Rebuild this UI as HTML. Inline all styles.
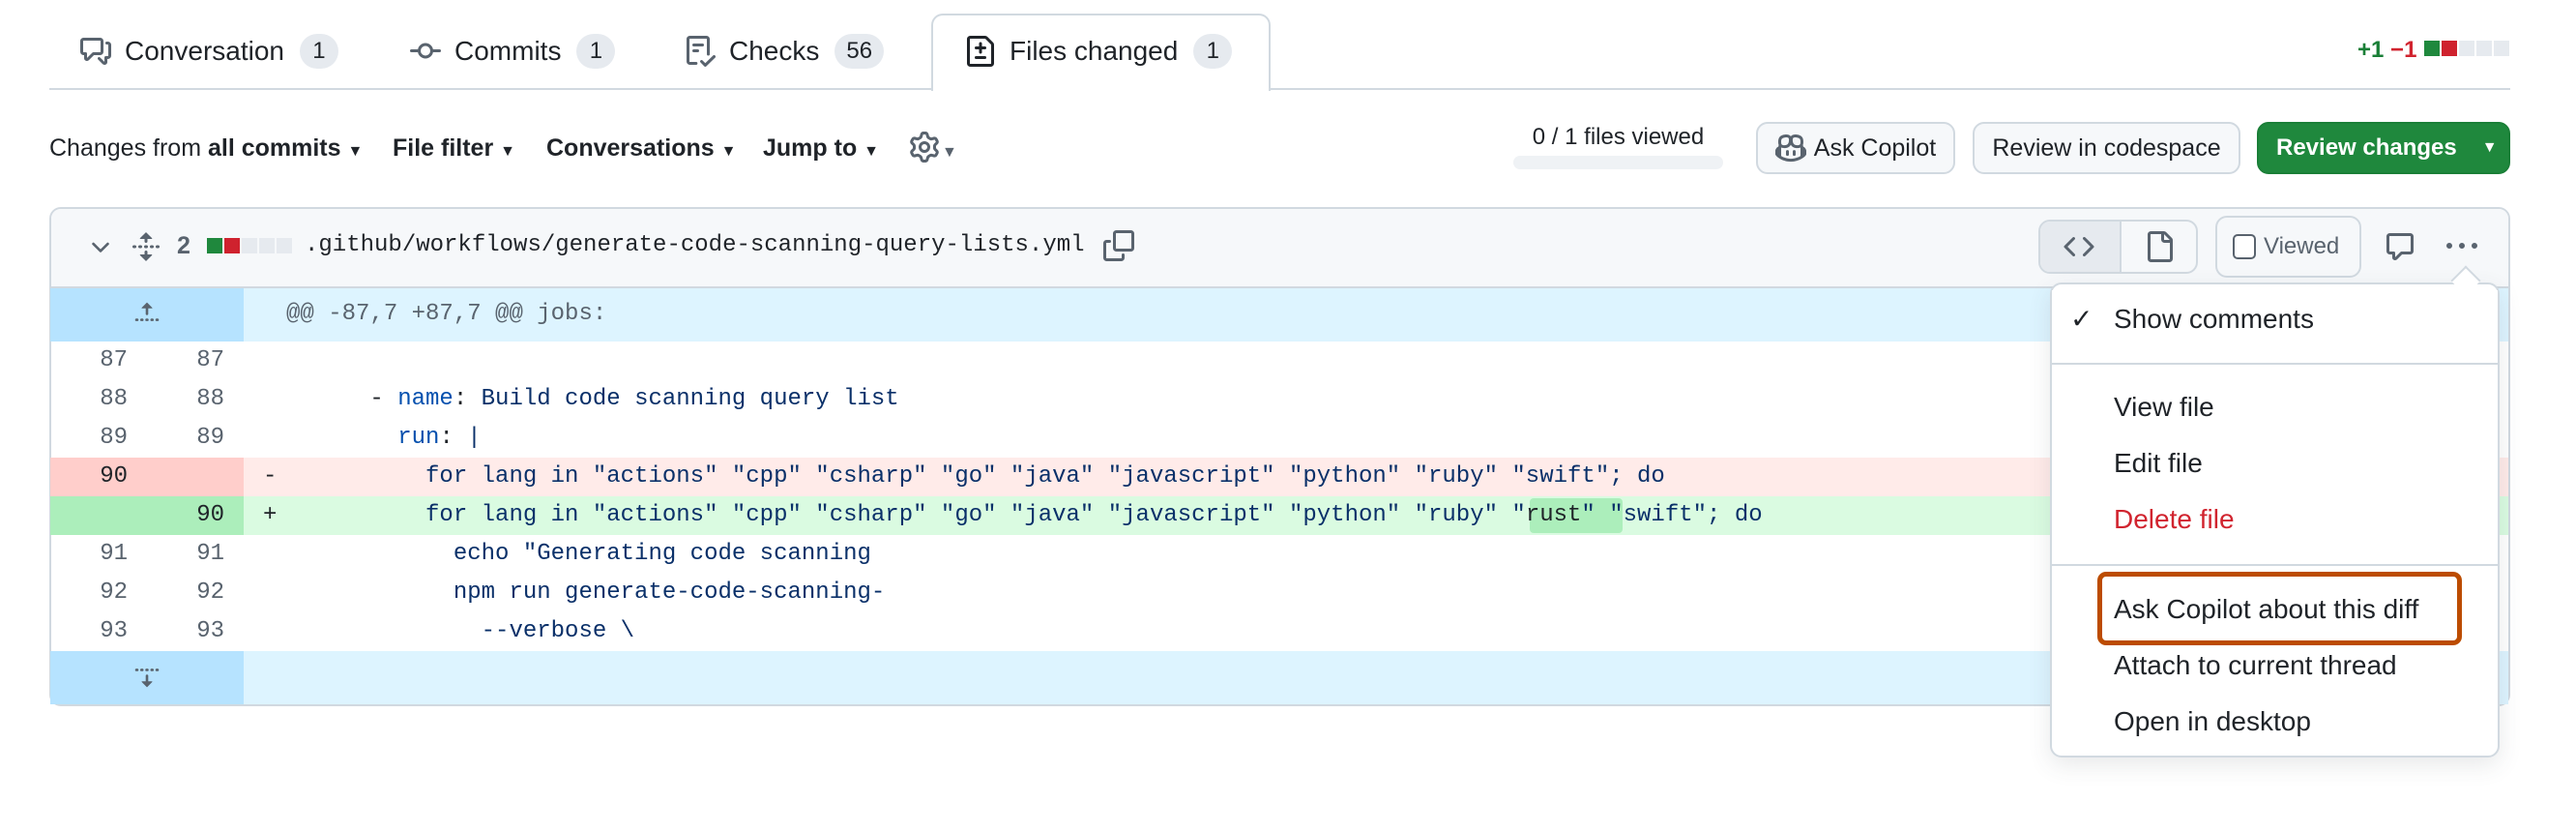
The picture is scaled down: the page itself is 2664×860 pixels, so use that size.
<!DOCTYPE html>
<html><head><meta charset="utf-8"><style>
*{box-sizing:border-box;margin:0;padding:0}
body{width:2664px;height:860px;background:#fff;position:relative;overflow:hidden;font-family:"Liberation Sans",sans-serif;color:#1f2328}
.a{position:absolute}
.tab{position:absolute;top:14px;height:78px;display:flex;align-items:center;font-size:28px;color:#1f2328;white-space:nowrap}
.cnt{display:inline-block;background:#e6eaef;border-radius:20px;min-width:40px;height:36px;line-height:36px;text-align:center;font-size:24px;margin-left:16px;padding:0 12px;color:#1f2328}
.tb{position:absolute;top:139px;font-size:25px;color:#1f2328;white-space:nowrap}
.btn{position:absolute;top:126px;height:54px;border:2px solid #d1d9e0;border-radius:12px;background:#f6f8fa;font-size:25px;display:flex;align-items:center;justify-content:center;color:#1f2328;white-space:nowrap}
.mono{font-family:"Liberation Mono",monospace;font-size:24px}
.row{position:absolute;left:52px;width:2542px;height:40px}
.ln{position:absolute;top:0;height:40px;line-height:40px;width:100px;text-align:right;padding-right:20px;color:#59636e;font-family:"Liberation Mono",monospace;font-size:24px}
.code{position:absolute;left:200px;top:0;height:40px;line-height:40px;white-space:pre;color:#0a3069;font-family:"Liberation Mono",monospace;font-size:24px}
.mk{position:absolute;left:220px;top:0;line-height:40px;font-family:"Liberation Mono",monospace;font-size:24px;color:#1f2328}
.mi{position:absolute;left:2186px;font-size:28px;color:#1f2328;white-space:nowrap;line-height:40px}
</style></head><body>

<!-- tabs -->
<div class="a" style="left:51px;top:91px;width:2545px;height:2px;background:#d1d9e0"></div>
<div class="a" style="left:963px;top:14px;width:351px;height:80px;border:2px solid #d1d9e0;border-bottom:none;border-radius:12px 12px 0 0;background:#fff"></div>

<div class="tab" style="left:83px">
<svg width="32" height="32" viewBox="0 0 16 16" style="margin-right:14px"><path fill="#59636e" d="M1.75 1h8.5c.966 0 1.750.784 1.75 1.75v5.5A1.75 1.75 0 0 1 10.25 10H7.061l-2.574 2.573A1.458 1.458 0 0 1 2 11.543V10h-.25A1.75 1.75 0 0 1 0 8.25v-5.5C0 1.784.784 1 1.750 1ZM1.5 2.75v5.5c0 .138.112.25.25.25h1a.75.75 0 0 1 .75.75v2.19l2.72-2.72a.749.749 0 0 1 .53-.22h3.5a.25.25 0 0 0 .25-.25v-5.5a.25.25 0 0 0-.25-.25h-8.5a.25.25 0 0 0-.25.25Zm13 2a.25.25 0 0 0-.25-.25h-.5a.75.75 0 0 1 0-1.5h.5c.966 0 1.75.784 1.75 1.75v5.5A1.75 1.75 0 0 1 14.25 12H14v1.543a1.458 1.458 0 0 1-2.487 1.03L9.22 12.28a.749.749 0 0 1 .326-1.275.749.749 0 0 1 .734.215l2.22 2.22v-2.19a.75.75 0 0 1 .75-.75h1a.25.25 0 0 0 .25-.25Z"/></svg>Conversation<span class="cnt">1</span></div>

<div class="tab" style="left:424px">
<svg width="32" height="32" viewBox="0 0 16 16" style="margin-right:14px"><path fill="#59636e" d="M11.93 8.5a4.002 4.002 0 0 1-7.860 0H.75a.75.75 0 0 1 0-1.5h3.32a4.002 4.002 0 0 1 7.86 0h3.32a.75.75 0 0 1 0 1.5Zm-1.43-.75a2.5 2.5 0 1 0-5 0 2.5 2.5 0 0 0 5 0Z"/></svg>Commits<span class="cnt">1</span></div>

<div class="tab" style="left:708px">
<svg width="32" height="32" viewBox="0 0 16 16" style="margin-right:14px"><path fill="#59636e" d="M2.5 1.75v11.5c0 .138.112.25.25.25h3.17a.75.75 0 0 1 0 1.5H2.75A1.75 1.75 0 0 1 1 13.25V1.75C1 .784 1.784 0 2.75 0h8.5C12.216 0 13 .784 13 1.75v7.736a.75.75 0 0 1-1.5 0V1.75a.25.25 0 0 0-.25-.25h-8.5a.25.25 0 0 0-.25.25Zm13.274 9.537v-.001l-4.557 4.45a.75.75 0 0 1-1.055-.008l-1.943-1.95a.75.75 0 0 1 1.062-1.058l1.419 1.425 4.026-3.932a.75.75 0 1 1 1.048 1.074ZM4.75 4h4.5a.75.75 0 0 1 0 1.5h-4.5a.75.75 0 0 1 0-1.5ZM4 7.75A.75.75 0 0 1 4.75 7h2a.75.75 0 0 1 0 1.5h-2A.75.75 0 0 1 4 7.750Z"/></svg>Checks<span class="cnt">56</span></div>

<div class="tab" style="left:998px">
<svg width="32" height="32" viewBox="0 0 16 16" style="margin-right:14px"><path fill="#1f2328" d="M1 1.75C1 .784 1.784 0 2.75 0h7.586c.464 0 .909.184 1.237.513l2.914 2.914c.329.328.513.773.513 1.237v9.586A1.75 1.75 0 0 1 13.25 16H2.75A1.75 1.75 0 0 1 1 14.25Zm1.75-.25a.25.25 0 0 0-.25.25v12.5c0 .138.112.25.25.25h10.5a.25.25 0 0 0 .25-.25V4.664a.25.25 0 0 0-.073-.177l-2.914-2.914a.25.25 0 0 0-.177-.073ZM8 3.25a.75.75 0 0 1 .75.75v1.5h1.5a.75.75 0 0 1 0 1.5h-1.5v1.5a.75.75 0 0 1-1.5 0V7h-1.5a.75.75 0 0 1 0-1.5h1.5V4A.75.75 0 0 1 8 3.25Zm-3 8a.75.75 0 0 1 .75-.75h4.5a.75.75 0 0 1 0 1.5h-4.5a.75.75 0 0 1-.75-.75Z"/></svg>Files changed<span class="cnt">1</span></div>

<div class="a" style="left:2438px;top:38px;font-size:24px;font-weight:bold;white-space:nowrap"><span style="color:#1a7f37">+1</span> <span style="color:#d1242f">−1</span></div>
<div class="a" style="left:2507px;top:42px;display:flex;gap:2px">
<i style="width:16px;height:16px;background:#1f883d"></i><i style="width:16px;height:16px;background:#cf222e"></i><i style="width:16px;height:16px;background:#e6eaef"></i><i style="width:16px;height:16px;background:#e6eaef"></i><i style="width:16px;height:16px;background:#e6eaef"></i></div>

<!-- toolbar -->
<div class="tb" style="left:51px">Changes from <b>all commits</b> <span style="font-size:16px">▼</span></div>
<div class="tb" style="left:406px;font-weight:bold">File filter <span style="font-size:16px">▼</span></div>
<div class="tb" style="left:565px;font-weight:bold">Conversations <span style="font-size:16px">▼</span></div>
<div class="tb" style="left:789px;font-weight:bold">Jump to <span style="font-size:16px">▼</span></div>
<div class="a" style="left:940px;top:136px"><svg width="32" height="32" viewBox="0 0 16 16"><path fill="#59636e" d="M8 0a8.2 8.2 0 0 1 .701.031C9.444.095 9.99.645 10.16 1.29l.288 1.107c.018.066.079.158.212.224.231.114.454.243.668.386.123.082.233.09.299.071l1.103-.303c.644-.176 1.392.021 1.82.63.27.385.506.792.704 1.218.315.675.111 1.422-.364 1.891l-.814.806c-.049.048-.098.147-.088.294.016.257.016.515 0 .772-.01.147.038.246.088.294l.814.806c.475.469.679 1.216.364 1.891a7.977 7.977 0 0 1-.704 1.217c-.428.61-1.176.807-1.820.63l-1.102-.302c-.067-.019-.177-.011-.3.071a5.909 5.909 0 0 1-.668.386c-.133.066-.194.158-.211.224l-.29 1.106c-.168.646-.715 1.196-1.458 1.26a8.006 8.006 0 0 1-1.402 0c-.743-.064-1.289-.614-1.458-1.26l-.289-1.106c-.018-.066-.079-.158-.212-.224a5.738 5.738 0 0 1-.668-.386c-.123-.082-.233-.09-.299-.071l-1.103.303c-.644.176-1.392-.021-1.82-.63a8.12 8.12 0 0 1-.704-1.218c-.315-.675-.111-1.422.363-1.891l.815-.806c.05-.048.098-.147.088-.294a6.214 6.214 0 0 1 0-.772c.01-.147-.038-.246-.088-.294l-.815-.806C.635 6.045.431 5.298.746 4.623a7.92 7.92 0 0 1 .704-1.217c.428-.61 1.176-.807 1.82-.63l1.102.302c.067.019.177.011.3-.071.214-.143.437-.272.668-.386.133-.066.194-.158.211-.224l.29-1.106C6.009.645 6.556.095 7.299.03 7.53.01 7.764 0 8 0Zm-.571 1.525c-.036.003-.108.036-.137.146l-.289 1.105c-.147.561-.549.967-.998 1.189-.173.086-.34.183-.5.29-.417.278-.97.423-1.529.27l-1.103-.303c-.109-.03-.175.016-.195.045-.22.312-.412.644-.573.99-.014.031-.021.11.059.19l.815.806c.411.406.562.957.53 1.456a4.709 4.709 0 0 0 0 .582c.032.499-.119 1.05-.53 1.456l-.815.806c-.081.08-.073.159-.059.19.162.346.353.677.573.989.02.03.085.076.195.046l1.102-.303c.56-.153 1.113-.008 1.53.27.161.107.328.204.501.29.447.222.85.629.997 1.189l.289 1.105c.029.109.101.143.137.146a6.6 6.6 0 0 0 1.142 0c.036-.003.108-.036.137-.146l.289-1.105c.147-.561.549-.967.998-1.189.173-.086.34-.183.5-.29.417-.278.97-.423 1.529-.27l1.103.303c.109.029.175-.016.195-.045.22-.313.411-.644.573-.99.014-.031.021-.11-.059-.19l-.815-.806c-.411-.406-.562-.957-.53-1.456a4.709 4.709 0 0 0 0-.582c-.032-.499.119-1.05.53-1.456l.815-.806c.081-.08.073-.159.059-.19a6.464 6.464 0 0 0-.573-.989c-.02-.03-.085-.076-.195-.046l-1.102.303c-.56.153-1.113.008-1.53-.27a4.44 4.44 0 0 0-.501-.29c-.447-.222-.85-.629-.997-1.189l-.289-1.105c-.029-.11-.101-.143-.137-.146a6.6 6.6 0 0 0-1.142 0ZM11 8a3 3 0 1 1-6 0 3 3 0 0 1 6 0ZM9.5 8a1.5 1.5 0 1 0-3.001.001A1.5 1.5 0 0 0 9.5 8Z"/></svg><span style="font-size:16px;color:#59636e;position:relative;top:-6px;margin-left:2px">▼</span></div>

<div class="a" style="left:1565px;top:128px;width:217px;text-align:center;font-size:24px;color:#1f2328">0 / 1 files viewed</div>
<div class="a" style="left:1565px;top:161px;width:217px;height:14px;background:#eff2f5;border-radius:7px"></div>

<div class="btn" style="left:1816px;width:206px"><svg width="32" height="32" viewBox="0 0 16 16" style="margin-right:8px"><path fill="#59636e" d="M7.998 15.035c-4.562 0-7.873-2.914-7.998-3.749V9.338c.085-.628.677-1.686 1.588-2.065.013-.07.024-.143.036-.218.029-.183.06-.384.126-.612-.201-.508-.254-1.084-.254-1.656 0-.87.128-1.769.693-2.484.579-.733 1.494-1.124 2.724-1.261 1.206-.134 2.262.034 2.944.765.05.053.096.108.139.165.044-.057.094-.112.143-.165.682-.731 1.738-.899 2.944-.765 1.23.137 2.145.528 2.724 1.261.566.715.693 1.614.693 2.484 0 .572-.053 1.148-.254 1.656.066.228.098.429.126.612.012.076.024.148.037.218.924.385 1.522 1.471 1.591 2.095v1.872c0 .766-3.351 3.795-8.002 3.795Zm0-1.485c2.28 0 4.584-1.11 5.002-1.433V7.862l-.023-.116c-.49.21-1.075.291-1.727.291-1.146 0-2.059-.327-2.71-.991A3.222 3.222 0 0 1 8 6.303a3.24 3.24 0 0 1-.544.743c-.65.664-1.563.991-2.71.991-.652 0-1.236-.081-1.727-.291l-.023.116v4.255c.419.323 2.722 1.433 5.002 1.433ZM6.762 2.83c-.193-.206-.637-.413-1.682-.297-1.019.113-1.479.404-1.713.7-.247.312-.369.789-.369 1.554 0 .793.129 1.171.308 1.371.162.181.519.379 1.442.379.853 0 1.339-.235 1.638-.54.315-.322.527-.827.617-1.553.117-.935-.037-1.395-.241-1.614Zm4.155-.297c-1.044-.116-1.488.091-1.681.297-.204.219-.359.679-.242 1.614.091.726.303 1.231.618 1.553.299.305.784.54 1.638.54.922 0 1.28-.198 1.442-.379.179-.2.308-.578.308-1.371 0-.765-.123-1.242-.37-1.554-.233-.296-.693-.587-1.713-.7Z"/><path fill="#59636e" d="M6.25 9.037a.75.75 0 0 1 .75.75v1.501a.75.75 0 0 1-1.5 0V9.787a.75.75 0 0 1 .75-.75Zm4.25.75v1.501a.75.75 0 0 1-1.5 0V9.787a.75.75 0 0 1 1.5 0Z"/></svg>Ask Copilot</div>
<div class="btn" style="left:2040px;width:277px">Review in codespace</div>
<div class="btn" style="left:2334px;width:262px;background:#1f883d;border-color:#1a7f37;color:#fff;justify-content:flex-start;padding-left:18px;font-weight:bold;font-size:24px">Review changes<span style="font-size:16px;margin-left:26px">▼</span></div>

<!-- file box -->
<div class="a" style="left:51px;top:214px;width:2545px;height:516px;border:2px solid #d1d9e0;border-radius:12px;overflow:hidden;background:#fff">
 <div class="a" style="left:0;top:0;width:100%;height:82px;background:#f6f8fa;border-bottom:2px solid #d1d9e0"></div>
</div>
<svg class="a" style="left:90px;top:242px" width="28" height="28" viewBox="0 0 16 16"><path fill="#59636e" d="M12.78 5.22a.749.749 0 0 1 0 1.06l-4.25 4.25a.749.749 0 0 1-1.06 0L3.22 6.28a.749.749 0 1 1 1.06-1.06L8 8.939l3.72-3.719a.749.749 0 0 1 1.06 0Z"/></svg>
<svg class="a" style="left:135px;top:239px" width="32" height="32" viewBox="0 0 16 16"><path fill="#59636e" d="m8.177.677 2.896 2.896a.25.25 0 0 1-.177.427H8.75v1.25a.75.75 0 0 1-1.5 0V4H5.104a.25.25 0 0 1-.177-.427L7.823.677a.25.25 0 0 1 .354 0ZM7.25 10.75a.75.75 0 0 1 1.5 0V12h2.146a.25.25 0 0 1 .177.427l-2.896 2.896a.25.25 0 0 1-.354 0l-2.896-2.896A.25.25 0 0 1 5.104 12H7.25v-1.25Zm-5-2a.75.75 0 0 0 0-1.5h-.5a.75.75 0 0 0 0 1.5h.5ZM6 8a.75.75 0 0 1-.75.75h-.5a.75.75 0 0 1 0-1.5h.5A.75.75 0 0 1 6 8Zm2.25.75a.75.75 0 0 0 0-1.5h-.5a.75.75 0 0 0 0 1.5h.5ZM12 8a.75.75 0 0 1-.75.75h-.5a.75.75 0 0 1 0-1.5h.5A.75.75 0 0 1 12 8Zm2.25.75a.75.75 0 0 0 0-1.5h-.5a.75.75 0 0 0 0 1.5h.5Z"/></svg>
<div class="a" style="left:183px;top:240px;font-size:25px;font-weight:bold;color:#59636e">2</div>
<div class="a" style="left:214px;top:246px;display:flex;gap:2px">
<i style="width:16px;height:16px;background:#1f883d"></i><i style="width:16px;height:16px;background:#cf222e"></i><i style="width:16px;height:16px;background:#e6eaef"></i><i style="width:16px;height:16px;background:#e6eaef"></i><i style="width:16px;height:16px;background:#e6eaef"></i></div>
<div class="a mono" style="left:315px;top:240px;color:#1f2328">.github/workflows/generate-code-scanning-query-lists.yml</div>
<svg class="a" style="left:1141px;top:238px" width="32" height="32" viewBox="0 0 16 16"><path fill="#59636e" d="M0 6.75C0 5.784.784 5 1.75 5h1.5a.75.75 0 0 1 0 1.5h-1.5a.25.25 0 0 0-.25.25v7.5c0 .138.112.25.25.25h7.5a.25.25 0 0 0 .25-.25v-1.5a.75.75 0 0 1 1.5 0v1.5A1.75 1.75 0 0 1 9.25 16h-7.5A1.75 1.75 0 0 1 0 14.25Z"/><path fill="#59636e" d="M5 1.75C5 .784 5.784 0 6.75 0h7.5C15.216 0 16 .784 16 1.75v7.5A1.75 1.75 0 0 1 14.25 11h-7.5A1.75 1.75 0 0 1 5 9.25Zm1.75-.25a.25.25 0 0 0-.25.25v7.5c0 .138.112.25.25.25h7.5a.25.25 0 0 0 .25-.25v-7.5a.25.25 0 0 0-.25-.25Z"/></svg>

<!-- right header controls -->
<div class="a" style="left:2108px;top:227px;width:165px;height:56px;border:2px solid #d1d9e0;border-radius:12px;overflow:hidden;background:#f6f8fa">
 <div class="a" style="left:0;top:0;width:84px;height:52px;background:#e6eaef;border-right:2px solid #d1d9e0"></div>
</div>
<svg class="a" style="left:2134px;top:239px" width="32" height="32" viewBox="0 0 16 16"><path fill="#59636e" d="m11.28 3.22 4.25 4.25a.75.75 0 0 1 0 1.06l-4.25 4.25a.749.749 0 0 1-1.275-.326.749.749 0 0 1 .215-.734L13.94 8l-3.72-3.72a.749.749 0 0 1 .326-1.275.749.749 0 0 1 .734.215Zm-6.56 0a.751.751 0 0 1 1.042.018.751.751 0 0 1 .018 1.042L2.06 8l3.72 3.72a.749.749 0 0 1-.326 1.275.749.749 0 0 1-.734-.215L.47 8.53a.75.75 0 0 1 0-1.060Z"/></svg>
<svg class="a" style="left:2217px;top:239px" width="32" height="32" viewBox="0 0 16 16"><path fill="#59636e" d="M2 1.75C2 .784 2.784 0 3.75 0h6.586c.464 0 .909.184 1.237.513l2.914 2.914c.329.328.513.773.513 1.237v9.586A1.75 1.75 0 0 1 13.25 16h-9.5A1.75 1.75 0 0 1 2 14.25Zm1.75-.25a.25.25 0 0 0-.25.25v12.5c0 .138.112.25.25.25h9.5a.25.25 0 0 0 .25-.25V6h-2.75A1.75 1.75 0 0 1 9 4.25V1.5Zm6.75.062V4.25c0 .138.112.25.25.25h2.688l-.011-.013-2.914-2.914-.013-.011Z"/></svg>
<div class="a" style="left:2291px;top:223px;width:151px;height:64px;border:2px solid #d1d9e0;border-radius:12px;background:#f6f8fa;display:flex;align-items:center;padding-left:16px;font-size:24px;color:#59636e"><span style="width:24px;height:26px;border:2px solid #59636e;border-radius:5px;margin-right:8px;background:#fff"></span>Viewed</div>
<svg class="a" style="left:2466px;top:239px" width="32" height="32" viewBox="0 0 16 16"><path fill="#59636e" d="M1 2.75C1 1.784 1.784 1 2.75 1h10.5c.966 0 1.75.784 1.75 1.75v7.5A1.75 1.75 0 0 1 13.25 12H9.06l-2.573 2.573A1.458 1.458 0 0 1 4 13.543V12H2.75A1.75 1.75 0 0 1 1 10.25Zm1.75-.25a.25.25 0 0 0-.25.25v7.5c0 .138.112.25.25.25h2a.75.75 0 0 1 .75.75v2.19l2.72-2.72a.749.749 0 0 1 .53-.22h4.5a.25.25 0 0 0 .25-.25v-7.5a.25.25 0 0 0-.25-.25Z"/></svg>
<svg class="a" style="left:2530px;top:239px" width="32" height="32" viewBox="0 0 16 16"><path fill="#59636e" d="M8 9a1.5 1.5 0 1 0 0-3 1.5 1.5 0 0 0 0 3ZM1.5 9a1.5 1.5 0 1 0 0-3 1.5 1.5 0 0 0 0 3Zm13 0a1.5 1.5 0 1 0 0-3 1.5 1.5 0 0 0 0 3Z"/></svg>

<!-- rows -->
<div class="row" style="top:298px;background:#ddf4ff;height:55px">
 <div class="a" style="left:0;top:0;width:200px;height:55px;background:#b6e3ff"></div>
 <svg class="a" style="left:86px;top:12px" width="28" height="28" viewBox="0 0 16 16"><path fill="#59636e" d="M7.823 1.677 4.927 4.573A.25.25 0 0 0 5.104 5H7.25v3.236a.75.75 0 1 0 1.5 0V5h2.146a.25.25 0 0 0 .177-.427L8.177 1.677a.25.25 0 0 0-.354 0ZM13.75 11a.75.75 0 0 0 0 1.5h.5a.75.75 0 0 0 0-1.5h-.5Zm-3.75.75a.75.75 0 0 1 .75-.75h.5a.75.75 0 0 1 0 1.5h-.5a.75.75 0 0 1-.75-.75ZM7.75 11a.75.75 0 0 0 0 1.5h.5a.75.75 0 0 0 0-1.5h-.5ZM4 11.75a.75.75 0 0 1 .75-.75h.5a.75.75 0 0 1 0 1.5h-.5a.75.75 0 0 1-.75-.75ZM1.75 11a.75.75 0 0 0 0 1.5h.5a.75.75 0 0 0 0-1.5h-.5Z"/></svg>
 <div class="code" style="left:244px;top:7px;color:#59636e">@@ -87,7 +87,7 @@ jobs:</div>
</div>

<div class="row" style="top:353px"><div class="ln" style="left:0">87</div><div class="ln" style="left:100px">87</div></div>
<div class="row" style="top:393px"><div class="ln" style="left:0">88</div><div class="ln" style="left:100px">88</div><div class="code" style="left:244px"><span style="color:#1f2328">      - </span><span style="color:#0550ae">name</span><span style="color:#1f2328">:</span> Build code scanning query list</div></div>
<div class="row" style="top:433px"><div class="ln" style="left:0">89</div><div class="ln" style="left:100px">89</div><div class="code" style="left:244px">        <span style="color:#0550ae">run</span><span style="color:#1f2328">:</span> |</div></div>
<div class="row" style="top:473px;background:#ffebe9"><div class="ln" style="left:0;width:200px;padding-right:120px;background:#ffcecb;color:#1f2328">90</div><div class="mk">-</div><div class="code" style="left:244px">          for lang in "actions" "cpp" "csharp" "go" "java" "javascript" "python" "ruby" "swift"; do</div></div>
<div class="row" style="top:513px;background:#dafbe1"><div class="ln" style="left:0;width:200px;background:#aceebb;color:#1f2328">90</div><div class="mk">+</div><div class="a" style="left:1530px;top:2px;width:96px;height:36px;background:#aceebb;border-radius:4px"></div><div class="code" style="left:244px">          for lang in "actions" "cpp" "csharp" "go" "java" "javascript" "python" "ruby" "<span style="color:#1f2328">rust</span>" "swift"; do</div></div>
<div class="row" style="top:553px"><div class="ln" style="left:0">91</div><div class="ln" style="left:100px">91</div><div class="code" style="left:244px">            echo "Generating code scanning</div></div>
<div class="row" style="top:593px"><div class="ln" style="left:0">92</div><div class="ln" style="left:100px">92</div><div class="code" style="left:244px">            npm run generate-code-scanning-</div></div>
<div class="row" style="top:633px"><div class="ln" style="left:0">93</div><div class="ln" style="left:100px">93</div><div class="code" style="left:244px">              --verbose \</div></div>
<div class="row" style="top:673px;background:#ddf4ff;height:55px">
 <div class="a" style="left:0;top:0;width:200px;height:55px;background:#b6e3ff"></div>
 <svg class="a" style="left:86px;top:12px" width="28" height="28" viewBox="0 0 16 16"><path fill="#59636e" d="m8.177 14.323 2.896-2.896a.25.25 0 0 0-.177-.427H8.75V7.764a.75.75 0 1 0-1.5 0V11H5.104a.25.25 0 0 0-.177.427l2.896 2.896a.25.25 0 0 0 .354 0ZM2.25 5a.75.75 0 0 0 0-1.5h-.5a.75.75 0 0 0 0 1.5h.5ZM6 4.25a.75.75 0 0 1-.75.75h-.5a.75.75 0 0 1 0-1.5h.5a.75.75 0 0 1 .75.75ZM8.25 5a.75.75 0 0 0 0-1.5h-.5a.75.75 0 0 0 0 1.5h.5ZM12 4.25a.75.75 0 0 1-.75.75h-.5a.75.75 0 0 1 0-1.5h.5a.75.75 0 0 1 .75.75Zm2.25.75a.75.75 0 0 0 0-1.5h-.5a.75.75 0 0 0 0 1.5h.5Z"/></svg>
</div>

<!-- menu -->
<div class="a" style="left:2120px;top:292px;width:465px;height:491px;background:#fff;border:2px solid #d1d9e0;border-radius:12px;box-shadow:0 8px 24px rgba(66,74,83,.12)"></div>
<div class="a" style="left:2539px;top:279px;width:22px;height:22px;background:#fff;border-left:2px solid #d1d9e0;border-top:2px solid #d1d9e0;transform:rotate(45deg)"></div>
<div class="a" style="left:2122px;top:300px;width:461px;height:20px;background:#fff"></div>
<div class="a" style="left:2141px;top:310px;font-size:28px;line-height:40px">✓</div>
<div class="mi" style="top:310px">Show comments</div>
<div class="a" style="left:2122px;top:375px;width:461px;height:2px;background:#d1d9e0"></div>
<div class="mi" style="top:401px">View file</div>
<div class="mi" style="top:459px">Edit file</div>
<div class="mi" style="top:517px;color:#d1242f">Delete file</div>
<div class="a" style="left:2122px;top:583px;width:461px;height:2px;background:#d1d9e0"></div>
<div class="a" style="left:2169px;top:591px;width:377px;height:76px;border:5px solid #bc4c00;border-radius:9px"></div>
<div class="mi" style="top:610px">Ask Copilot about this diff</div>
<div class="mi" style="top:668px">Attach to current thread</div>
<div class="mi" style="top:726px">Open in desktop</div>

</body></html>
